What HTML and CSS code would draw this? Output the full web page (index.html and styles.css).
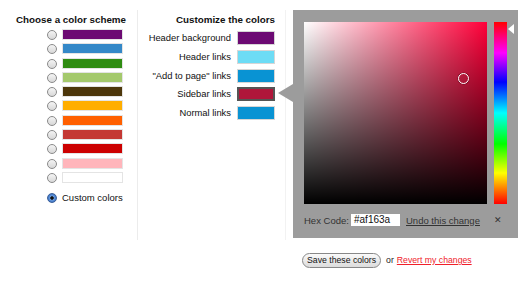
FILE: index.html
```html
<!DOCTYPE html>
<html>
<head>
<meta charset="utf-8">
<link rel="stylesheet" href="styles.css">
</head>
<body>
<div class="page">
  <div class="main">
    <div class="col-left">
      <div class="title">Choose a color scheme</div>
      <div class="schemes">
        <div class="scheme"><span class="radio"></span><span class="bar" style="background:#6c0a73"></span></div>
        <div class="scheme"><span class="radio"></span><span class="bar" style="background:#3488c8"></span></div>
        <div class="scheme"><span class="radio"></span><span class="bar" style="background:#2f8c12"></span></div>
        <div class="scheme"><span class="radio"></span><span class="bar" style="background:#a4c96c"></span></div>
        <div class="scheme"><span class="radio"></span><span class="bar" style="background:#4d370b"></span></div>
        <div class="scheme"><span class="radio"></span><span class="bar" style="background:#ffae00"></span></div>
        <div class="scheme"><span class="radio"></span><span class="bar" style="background:#ff6000"></span></div>
        <div class="scheme"><span class="radio"></span><span class="bar" style="background:#c43834"></span></div>
        <div class="scheme"><span class="radio"></span><span class="bar" style="background:#cc0000"></span></div>
        <div class="scheme"><span class="radio"></span><span class="bar" style="background:#ffb5bb"></span></div>
        <div class="scheme"><span class="radio"></span><span class="bar" style="background:#ffffff"></span></div>
      </div>
      <div class="custom"><span class="radio checked"></span><span class="custom-label">Custom colors</span></div>
    </div>
    <div class="col-mid">
      <div class="title">Customize the colors</div>
      <div class="fields">
        <div class="field"><span class="label">Header background</span><span class="sw" style="background:#6c0a73"></span></div>
        <div class="field"><span class="label">Header links</span><span class="sw" style="background:#6ddcf5"></span></div>
        <div class="field"><span class="label">"Add to page" links</span><span class="sw" style="background:#0993d3"></span></div>
        <div class="field"><span class="label">Sidebar links</span><span class="sw selected" style="background:#af163a"></span></div>
        <div class="field"><span class="label">Normal links</span><span class="sw" style="background:#0993d3"></span></div>
      </div>
    </div>
    <div class="picker">
      <div class="picker-top">
        <div class="sv">
          <div class="sv-white"></div>
          <div class="sv-black"></div>
          <span class="marker"></span>
        </div>
        <div class="hue">
          <span class="hue-arrow"></span>
        </div>
      </div>
      <div class="hex-row">
        <span class="hex-label">Hex Code:</span>
        <span class="hex-input">#af163a</span>
        <a class="undo" href="#">Undo this change</a>
        <span class="close">&#x2715;</span>
      </div>
    </div>
  </div>
  <div class="actions">
    <span class="btn">Save these colors</span>
    <span class="or">or</span>
    <a class="revert" href="#">Revert my changes</a>
  </div>
</div>
</body>
</html>
```
FILE: styles.css
```css
* { box-sizing: border-box; }
html, body { margin: 0; padding: 0; background: #fff; }
body {
  font-family: "Liberation Sans", Arial, sans-serif;
  font-size: 10px;
  color: #222;
  width: 530px;
  height: 281px;
  overflow: hidden;
  white-space: nowrap;
}
.page { padding-top: 10px; }
.main { display: flex; align-items: flex-start; }

.title {
  font-weight: bold;
  font-size: 9.8px;
  line-height: 12px;
  color: #111;
  text-align: right;
}

.col-left {
  width: 138px;
  height: 230px;
  border-right: 1px solid #ececec;
  padding: 4px 11px 0 0;
}
.col-left .title { margin-bottom: 3px; }
.schemes { padding-left: 47px; }
.scheme { display: flex; align-items: flex-start; height: 14.3px; }
.radio {
  width: 10px; height: 10px;
  border-radius: 50%;
  border: 1px solid #8a8a8a;
  background: linear-gradient(#f4f4f4, #d8d8d8);
  flex: none;
  margin-top: 1px;
}
.radio.checked {
  border-color: #3a5f99;
  background: radial-gradient(circle, #111 0 1.4px, #6b9ee0 2px, #2d63b8 5px);
}
.bar {
  width: 61px; height: 11px;
  margin-left: 5px;
  border: 1px solid #e4e4e4;
  flex: none;
}
.custom {
  display: flex; align-items: center;
  padding-left: 47px;
  margin-top: 4px;
  height: 14px;
}
.custom-label { margin-left: 5px; font-size: 9.5px; color: #111; }

.col-mid {
  width: 148px;
  height: 230px;
  border-right: 1px solid #f2f2f2;
  padding: 4px 10px 0 0;
}
.col-mid .title { margin-bottom: 5px; }
.field {
  display: flex; justify-content: flex-end; align-items: flex-start;
  height: 18.75px;
  gap: 6px;
}
.label { line-height: 14px; color: #111; font-size: 9.4px; }
.sw {
  width: 38px; height: 14px;
  border: 1px solid #d6d6d6;
  flex: none;
}
.sw.selected { border: 2px solid #555; }

.picker {
  position: relative;
  margin-left: 7px;
  width: 225px;
  height: 228px;
  background: #9c9c9c;
  padding: 12px 11px 0 11px;
}
.picker::before {
  content: "";
  position: absolute;
  left: -15px; top: 74px;
  border-right: 15px solid #9c9c9c;
  border-top: 9px solid transparent;
  border-bottom: 9px solid transparent;
}
.picker-top { display: flex; gap: 7px; }
.sv {
  position: relative;
  width: 183px; height: 182px;
  background: #ff0039;
}
.sv-white, .sv-black { position: absolute; inset: 0; }
.sv-white { background: linear-gradient(to right, #fff, rgba(255,255,255,0)); }
.sv-black { background: linear-gradient(to bottom, rgba(0,0,0,0), #000); }
.marker {
  position: absolute;
  left: 154px; top: 51px;
  width: 11px; height: 11px;
  border-radius: 50%;
  border: 1.5px solid #fff;
  box-shadow: 0 0 0 0.5px rgba(0,0,0,0.4);
}
.hue {
  position: relative;
  width: 13px; height: 182px;
  background: linear-gradient(to bottom, #f00 0%, #f0f 17%, #00f 33%, #0ff 50%, #0f0 67%, #ff0 83%, #f00 100%);
}
.hue-arrow {
  position: absolute;
  left: 14px; top: 2px;
  border-right: 6px solid #fff;
  border-top: 5px solid transparent;
  border-bottom: 5px solid transparent;
}
.hex-row {
  display: flex; align-items: center;
  margin-top: 10px;
  height: 12px;
  font-size: 9.5px;
  color: #333;
}
.hex-label { width: 47px; }
.hex-input {
  background: #fff;
  width: 49px; height: 12px;
  line-height: 12px;
  padding-left: 3px;
  color: #111;
  font-size: 10px;
}
.undo { margin-left: 6px; color: #333; text-decoration: underline; }
.close { margin-left: auto; margin-right: 5px; font-size: 9px; color: #333; }

.actions {
  display: flex; align-items: center;
  padding-left: 302px;
  margin-top: 13px;
  height: 14px;
  font-size: 8.7px;
}
.btn {
  height: 15px;
  padding: 0 4px;
  border: 1px solid #888;
  border-radius: 8px;
  background: linear-gradient(#fafafa, #dcdcdc);
  line-height: 13px;
  color: #111;
}
.or { margin-left: 5px; color: #222; }
.revert { margin-left: 3px; color: #f0202a; text-decoration: underline; }
```
